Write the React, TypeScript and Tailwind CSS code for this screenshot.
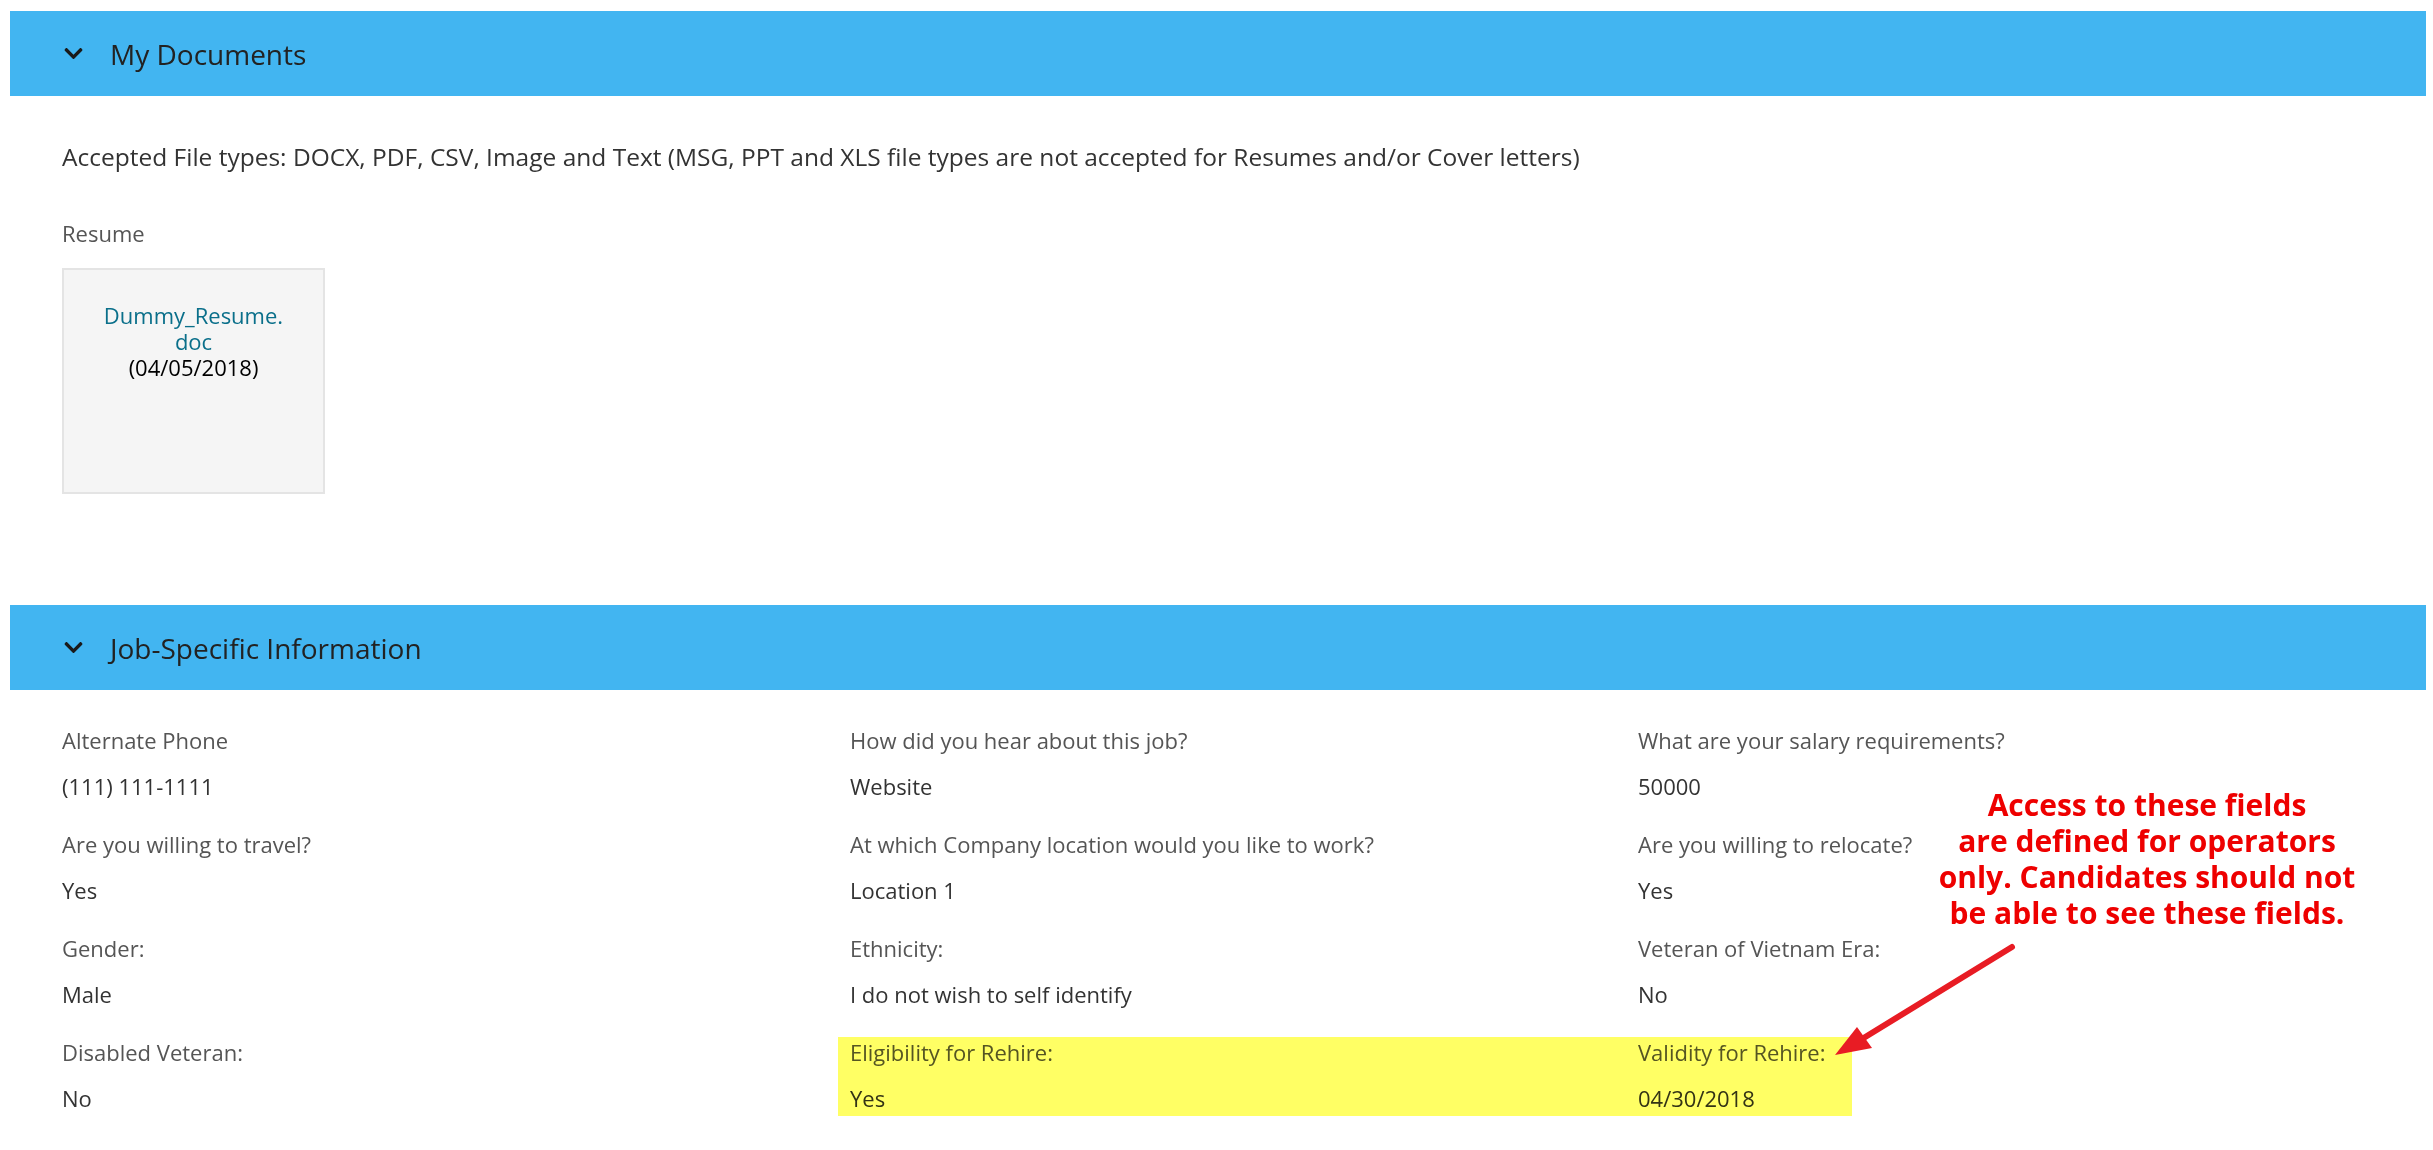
import React from "react";
import { FaChevronDown } from "react-icons/fa";

const font = { fontFamily: '"Open Sans", "Liberation Sans", sans-serif' };

function SectionHeader({ title }: { title: string }) {
  return (
    <div className="flex h-[85px] items-center bg-[#42b5f1] pl-[53px] text-[#222]">
      <FaChevronDown className="text-[21px] text-[#1a1a1a]" />
      <span className="ml-[26px] text-[28px] leading-[38px]">{title}</span>
    </div>
  );
}

function Field({ label, value }: { label: string; value: string }) {
  return (
    <div className="flex flex-col gap-[16px]">
      <div className="text-[22px] leading-[30px] text-[#555]">{label}</div>
      <div className="text-[22px] leading-[30px] text-[#333]">{value}</div>
    </div>
  );
}

const fields: [string, string][] = [
  ["Alternate Phone", "(111) 111-1111"],
  ["How did you hear about this job?", "Website"],
  ["What are your salary requirements?", "50000"],
  ["Are you willing to travel?", "Yes"],
  ["At which Company location would you like to work?", "Location 1"],
  ["Are you willing to relocate?", "Yes"],
  ["Gender:", "Male"],
  ["Ethnicity:", "I do not wish to self identify"],
  ["Veteran of Vietnam Era:", "No"],
  ["Disabled Veteran:", "No"],
  ["Eligibility for Rehire:", "Yes"],
  ["Validity for Rehire:", "04/30/2018"],
];

export default function App() {
  return (
    <div className="relative min-h-[1150px] w-full bg-white pl-[10px] pr-[7px] pt-[11px]" style={font}>
      <SectionHeader title="My Documents" />
      <div className="pl-[52px]">
        <p className="mt-[45px] text-[24.5px] leading-[32px] text-[#333]">
          Accepted File types: DOCX, PDF, CSV, Image and Text (MSG, PPT and XLS file types are not accepted for Resumes and/or Cover letters)
        </p>
        <div className="mt-[45px] text-[22px] leading-[30px] text-[#555]">Resume</div>
        <div className="mt-[20px] flex h-[226px] w-[263px] flex-col items-center border-2 border-[#e4e4e4] bg-[#f5f5f5] px-[16px] pt-[32px] text-center text-[22px] leading-[26px]">
          <a className="text-[#0a6f8a]" href="#">
            Dummy_Resume.
            <br />
            doc
          </a>
          <span className="text-black">(04/05/2018)</span>
        </div>
      </div>
      <div className="mt-[111px]">
        <SectionHeader title="Job-Specific Information" />
      </div>
      <div className="grid grid-cols-3 gap-y-[28px] pl-[52px] pt-[35px]">
        {fields.map(([l, v]) => (
          <Field key={l} label={l} value={v} />
        ))}
      </div>

      {/* highlighter annotation */}
      <div className="pointer-events-none absolute left-[838px] top-[1037px] h-[79px] w-[1014px] bg-[#ffff64] mix-blend-multiply" />

      {/* red annotation text */}
      <div
        className="absolute left-[1917px] top-[787px] w-[460px] text-center text-[30px] font-bold leading-[36px] text-[#ee0000]"
        style={{ fontFamily: '"Open Sans", "Liberation Sans", sans-serif' }}
      >
        Access to these fields
        <br />
        are defined for operators
        <br />
        only. Candidates should not
        <br />
        be able to see these fields.
      </div>

      {/* arrow */}
      <svg className="absolute left-[1820px] top-[930px]" width="210" height="140" viewBox="0 0 210 140">
        <line x1="192" y1="17" x2="42" y2="109" stroke="#e81c24" strokeWidth="6" strokeLinecap="round" />
        <polygon points="15,125 37,97 52,118" fill="#e81c24" />
      </svg>
    </div>
  );
}
